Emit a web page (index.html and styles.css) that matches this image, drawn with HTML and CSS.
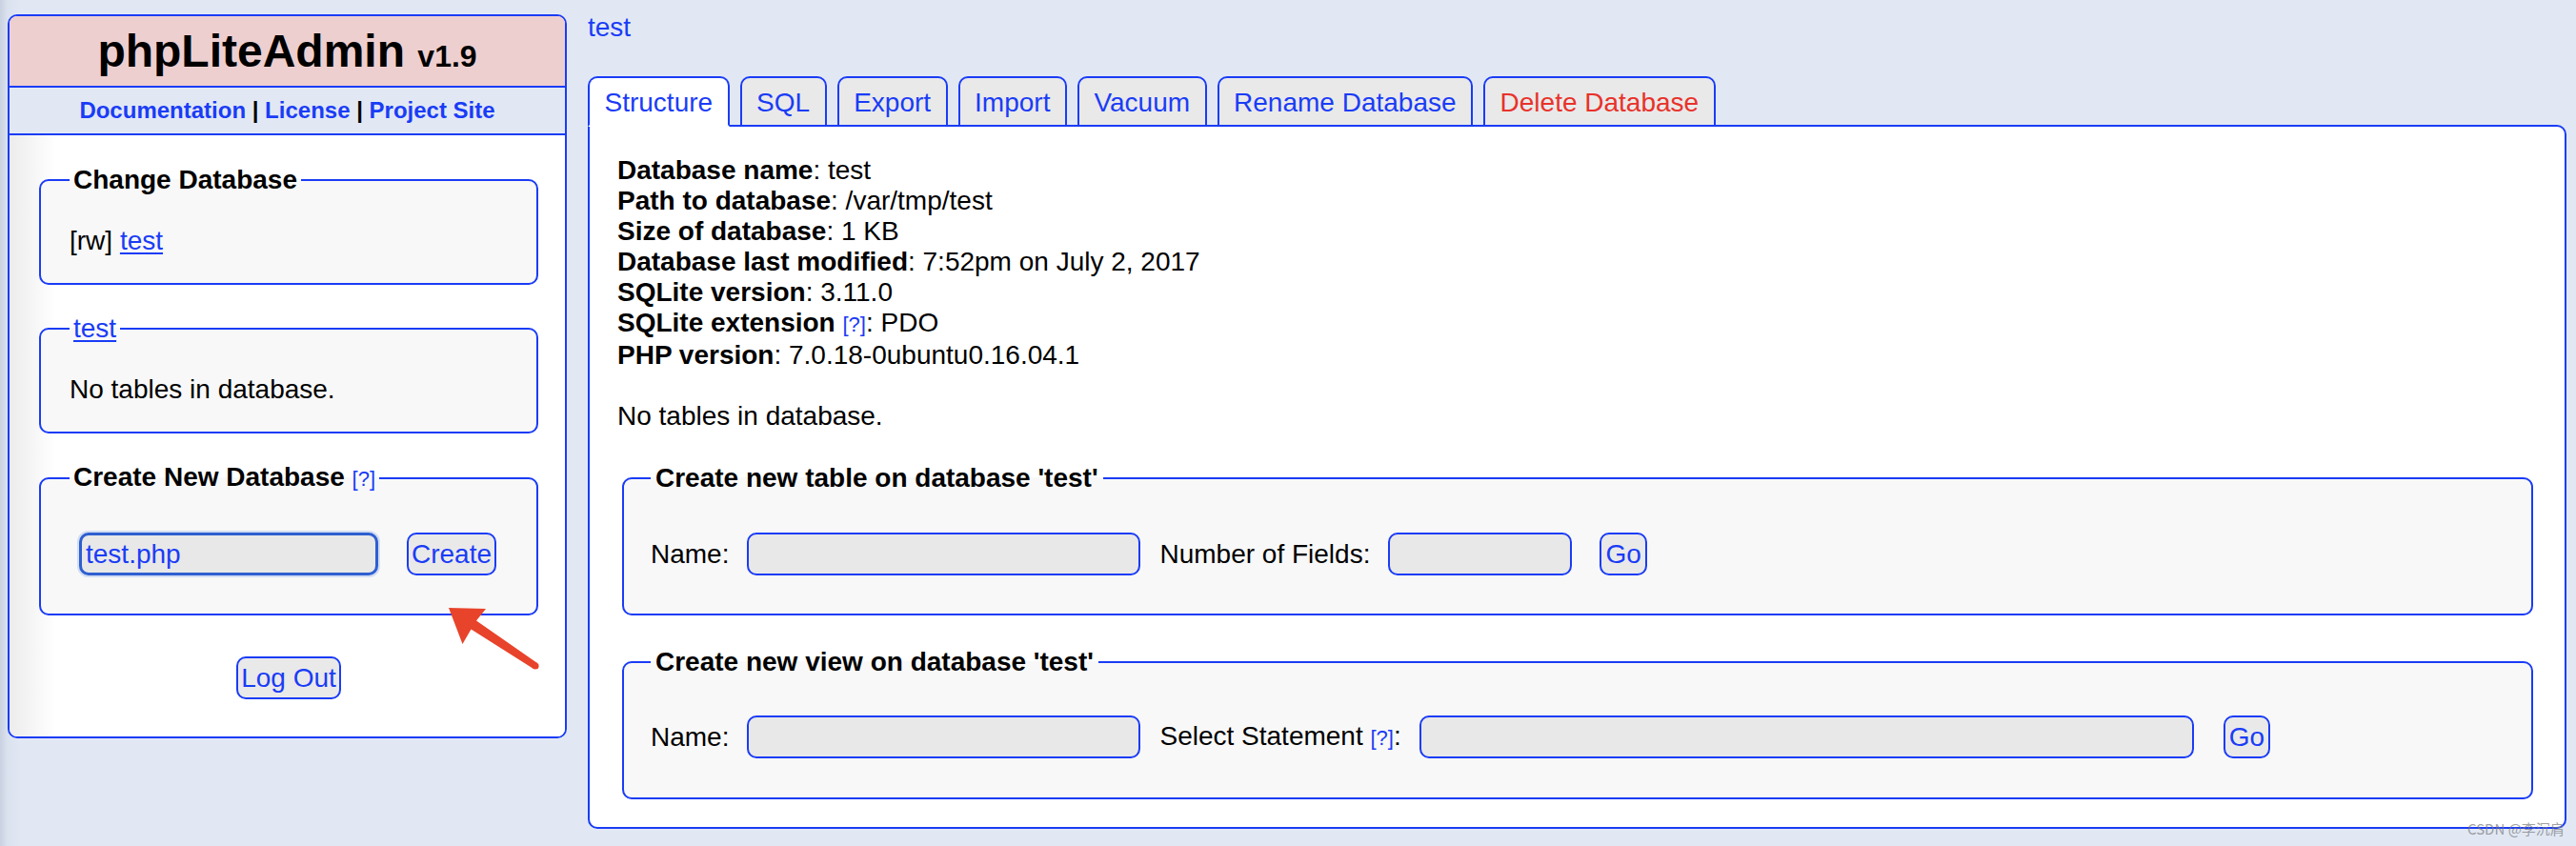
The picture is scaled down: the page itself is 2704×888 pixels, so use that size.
FILE: index.html
```html
<!DOCTYPE html>
<html lang="en">
<head>
<meta charset="utf-8">
<title>phpLiteAdmin</title>
<link rel="stylesheet" href="styles.css">
</head>
<body>
<aside class="sidebar">
  <header class="brand"><span class="brand-name">phpLiteAdmin</span> <span class="brand-version">v1.9</span></header>
  <nav class="brand-links"><a href="#">Documentation</a> | <a href="#">License</a> | <a href="#">Project Site</a></nav>
  <div class="sidebar-body">
    <fieldset class="box">
      <legend>Change Database</legend>
      <div class="box-line">[rw] <a href="#" class="ul">test</a></div>
    </fieldset>
    <fieldset class="box">
      <legend class="legend-link"><a href="#" class="ul">test</a></legend>
      <div class="box-line">No tables in database.</div>
    </fieldset>
    <fieldset class="box box-form">
      <legend>Create New Database <a href="#" class="help">[?]</a></legend>
      <div class="row">
        <input class="field field-db field-focus" type="text" value="test.php" autofocus>
        <button class="btn btn-create" type="button">Create</button>
      </div>
    </fieldset>
    <div class="logout-row"><button class="btn" type="button">Log Out</button></div>
  </div>
</aside>

<main class="main">
  <div class="crumb"><a href="#">test</a></div>
  <div class="tabs">
    <a href="#" class="tab active">Structure</a>
    <a href="#" class="tab">SQL</a>
    <a href="#" class="tab">Export</a>
    <a href="#" class="tab">Import</a>
    <a href="#" class="tab">Vacuum</a>
    <a href="#" class="tab">Rename Database</a>
    <a href="#" class="tab tab-danger">Delete Database</a>
  </div>
  <section class="panel">
    <div class="info">
      <div><b>Database name</b>: test</div>
      <div><b>Path to database</b>: /var/tmp/test</div>
      <div><b>Size of database</b>: 1 KB</div>
      <div><b>Database last modified</b>: 7:52pm on July 2, 2017</div>
      <div><b>SQLite version</b>: 3.11.0</div>
      <div><b>SQLite extension</b> <a href="#" class="help">[?]</a>: PDO</div>
      <div><b>PHP version</b>: 7.0.18-0ubuntu0.16.04.1</div>
    </div>
    <p class="empty">No tables in database.</p>

    <fieldset class="box box-main box-first">
      <legend>Create new table on database 'test'</legend>
      <div class="row">
        <span>Name:</span>
        <input class="field field-name" type="text">
        <span>Number of Fields:</span>
        <input class="field field-num" type="text">
        <button class="btn btn-go" type="button">Go</button>
      </div>
    </fieldset>

    <fieldset class="box box-main box-second">
      <legend>Create new view on database 'test'</legend>
      <div class="row">
        <span>Name:</span>
        <input class="field field-name" type="text">
        <span>Select Statement <a href="#" class="help">[?]</a>:</span>
        <input class="field field-select" type="text">
        <button class="btn btn-go btn-go-wide" type="button">Go</button>
      </div>
    </fieldset>
  </section>
</main>

<svg class="arrow" width="116" height="84" viewBox="0 0 116 84" aria-hidden="true">
  <polygon points="11,10 50,11 40,23.5 104,68 100,74 34.5,32.5 25.5,48" fill="#e8432b"/>
  <circle cx="102" cy="71" r="3.6" fill="#e8432b"/>
</svg>
<div class="watermark">CSDN @李沉肩</div>
</body>
</html>
```

FILE: styles.css
```css
:root {
  --blue: #1a3cf6;
  --red: #e8322a;
}

html, body {
  height: 100%;
}

body {
  margin: 0;
  display: flex;
  align-items: flex-start;
  background: linear-gradient(to right, #c9d2e1 0, #dbe2ef 8px, #e1e8f4 22px) #e1e8f4;
  font-family: "Liberation Sans", Arial, Helvetica, sans-serif;
  font-size: 28px;
  line-height: 32px;
  color: #000;
}

a {
  color: var(--blue);
  text-decoration: none;
}

a.ul {
  text-decoration: underline;
  text-decoration-thickness: 2px;
  text-underline-offset: 3px;
}

/* ---------- sidebar ---------- */
.sidebar {
  width: 587px;
  box-sizing: border-box;
  margin: 15px 0 0 8px;
  border: 2px solid var(--blue);
  border-radius: 10px;
  overflow: hidden;
  background: #fff;
  flex: none;
}

.brand {
  height: 72px;
  padding-top: 1px;
  line-height: 72px;
  font-size: 48px;
  font-weight: bold;
  text-align: center;
  background: #eecfcf;
  border-bottom: 2px solid var(--blue);
}

.brand-name {
  font-size: 48px;
}

.brand-version {
  font-size: 32px;
}

.brand-links {
  height: 48px;
  line-height: 48px;
  font-size: 24px;
  font-weight: bold;
  text-align: center;
  background: #e1e8f4;
  border-bottom: 2px solid var(--blue);
}

.sidebar-body {
  display: flex;
  flex-direction: column;
  gap: 30px;
  padding: 31px 28px 39px 31px;
  background: linear-gradient(to right, #ececec 0, #fff 48px);
}

/* ---------- fieldsets ---------- */
.box {
  margin: 0;
  min-width: 0;
  padding: 32px 28px 28px 30px;
  border: 2px solid var(--blue);
  border-radius: 10px;
  background: #f8f8f8;
}

.box legend {
  padding: 0 4px;
  font-weight: bold;
  line-height: 32px;
}

.box legend.legend-link {
  font-weight: normal;
}

.box-form {
  padding-top: 40px;
  padding-bottom: 40px;
}

.help {
  font-size: 22px;
  font-weight: normal;
  color: var(--blue);
}

.row {
  display: flex;
  align-items: center;
  height: 45px;
  white-space: nowrap;
}

.field {
  box-sizing: border-box;
  height: 45px;
  margin: 0 20px 0 19px;
  padding: 0 5px;
  border: 2px solid var(--blue);
  border-radius: 10px;
  background: #e8e8e8;
  font-family: inherit;
  font-size: 28px;
  color: var(--blue);
  outline: none;
  flex: none;
}

.field-db {
  width: 314px;
  margin: 0 0 0 10px;
  padding-left: 4px;
}

.field-focus {
  border: 3px solid #2e5fd1;
  box-shadow: 0 0 0 2px #d3ddf2;
  caret-color: var(--blue);
}

.field-name {
  width: 413px;
}

.field-num {
  width: 193px;
}

.field-select {
  width: 813px;
}

.btn {
  box-sizing: border-box;
  height: 45px;
  padding: 0 3px;
  border: 2px solid var(--blue);
  border-radius: 10px;
  background: #e9e9e9;
  color: var(--blue);
  font-family: inherit;
  font-size: 28px;
  line-height: 32px;
  flex: none;
}

.btn-create {
  margin-left: 30px;
}

.btn-go {
  margin-left: 9px;
  padding: 0 4px;
}

.btn-go-wide {
  margin-left: 11px;
}

.logout-row {
  margin-top: 13px;
  text-align: center;
}

/* ---------- main ---------- */
.main {
  flex: 1;
  min-width: 0;
  margin: 0 10px 0 22px;
  padding-top: 13px;
}

.crumb {
  line-height: 32px;
}

.tabs {
  display: flex;
  gap: 11px;
  margin-top: 35px;
  margin-bottom: -2px;
}

.tab {
  padding: 10px 15.5px 7px;
  line-height: 32px;
  border: 2px solid var(--blue);
  border-radius: 10px 10px 0 0;
  background: #e9e9e9;
  color: var(--blue);
  white-space: nowrap;
}

.tab.active {
  background: #fff;
  border-bottom-color: #fff;
}

.tab-danger {
  color: var(--red);
}

.panel {
  border: 2px solid var(--blue);
  border-radius: 0 10px 10px 10px;
  background: #fff;
  padding: 30px 33px 29px 29px;
}

.info {
  line-height: 32px;
}

.empty {
  margin: 32px 0 0;
}

.box-main {
  margin: 33px 0 0 5px;
  padding: 41px 28px 40px 28px;
}

.box-main legend {
  padding: 0 5px;
}

.box-second {
  padding-top: 40px;
  padding-bottom: 41px;
}

/* ---------- overlays ---------- */
.arrow {
  position: absolute;
  left: 460px;
  top: 628px;
}

.watermark {
  position: absolute;
  left: 2590px;
  top: 860px;
  font-family: "Noto Sans CJK SC", "Noto Sans", sans-serif;
  font-size: 15px;
  line-height: 20px;
  color: rgba(120, 120, 120, 0.7);
  white-space: nowrap;
}
```
